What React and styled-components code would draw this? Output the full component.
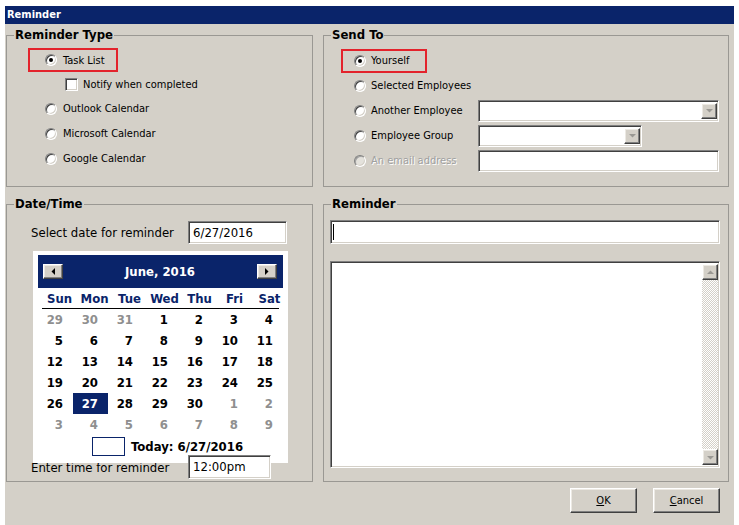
import React from 'react';
import styled, { createGlobalStyle } from 'styled-components';

const FONT = `"DejaVu Sans Condensed", "DejaVu Sans", "Liberation Sans", sans-serif`;
const NAVY = '#0a246a';
const FACE = '#d4d0c8';

const GlobalStyle = createGlobalStyle`
  html, body { margin: 0; padding: 0; background: #fff; }
  body { font-family: ${FONT}; color: #000; }
`;

const Page = styled.div`
  padding: 6px 0 0 5px;
`;

const Window = styled.div`
  width: 729px;
  height: 519px;
  background: ${FACE};
  display: flex;
  flex-direction: column;
`;

const TitleBar = styled.div`
  height: 18px;
  background: ${NAVY};
  color: #fff;
  font-weight: bold;
  font-size: 11px;
  line-height: 18px;
  padding-left: 2px;
`;

const Body = styled.div`
  display: grid;
  grid-template-columns: 307px 406px;
  grid-template-rows: 160px 286px;
  column-gap: 10px;
  row-gap: 9px;
  padding: 3px 6px 0 1px;
`;

const Group = styled.fieldset`
  margin: 0;
  padding: 0;
  min-width: 0;
  border: 1px solid #9a9893;
  display: flex;
  flex-direction: column;
`;

const Legend = styled.legend`
  margin-left: 7px;
  padding: 0 1px;
  font-weight: bold;
  font-size: 13px;
  line-height: 16px;
`;

/* ---------- shared control pieces ---------- */

const Radio = styled.span`
  width: 12px;
  height: 12px;
  border-radius: 50%;
  box-sizing: border-box;
  flex: none;
  background: ${p => (p.$disabled ? '#e4e2dc' : '#fff')};
  border: 1px solid;
  border-color: #808080 #fff #fff #808080;
  box-shadow: inset 1px 1px 0 ${p => (p.$disabled ? '#a0a0a0' : '#404040')}, inset -1px -1px 0 ${FACE};
  display: flex;
  align-items: center;
  justify-content: center;
  &::after {
    content: '';
    width: 4px;
    height: 4px;
    border-radius: 50%;
    background: #000;
    display: ${p => (p.$checked ? 'block' : 'none')};
  }
`;

const Check = styled.span`
  width: 13px;
  height: 13px;
  box-sizing: border-box;
  flex: none;
  background: #fff;
  border: 1px solid;
  border-color: #808080 #fff #fff #808080;
  box-shadow: inset 1px 1px 0 #404040, inset -1px -1px 0 ${FACE};
`;

const OptionLabel = styled.span`
  font-size: 11px;
  white-space: nowrap;
  color: ${p => (p.$disabled ? '#a0a0a0' : '#000')};
  text-shadow: ${p => (p.$disabled ? '1px 1px 0 #fff' : 'none')};
`;

const Option = styled.div`
  display: flex;
  align-items: center;
  gap: ${p => p.$gap || 6}px;
  height: ${p => p.$h || 25}px;
  padding-left: ${p => p.$indent || 0}px;
  box-sizing: border-box;
`;

const Highlight = styled(Option)`
  border: 2px solid #e3232c;
  width: ${p => p.$w}px;
`;

const Sunken = styled.div`
  box-sizing: border-box;
  background: #fff;
  border: 1px solid;
  border-color: #808080 #fff #fff #808080;
  box-shadow: inset 1px 1px 0 #404040, inset -1px -1px 0 ${FACE};
  width: ${p => p.$w}px;
  height: ${p => p.$h}px;
  font-size: 13px;
  line-height: ${p => p.$h - 2}px;
  padding-left: 4px;
  display: flex;
  align-items: center;
  position: relative;
`;

const Raised = styled.div`
  box-sizing: border-box;
  background: ${FACE};
  border: 1px solid;
  border-color: #fff #404040 #404040 #fff;
  box-shadow: inset -1px -1px 0 #808080, inset 1px 1px 0 #ece9e3;
  display: flex;
  align-items: center;
  justify-content: center;
`;

const DropButton = styled(Raised)`
  width: 16px;
  height: 16px;
  margin-left: auto;
  margin-right: 1px;
`;

const Arrow = ({ dir = 'down', color = '#9a9893', size = 7 }) => {
  const pts = {
    down: '0,2 7,2 3.5,5.5',
    up: '0,5 7,5 3.5,1.5',
    left: '5,0 5,7 1.5,3.5',
    right: '2,0 2,7 5.5,3.5',
  }[dir];
  return (
    <svg width={size} height={size} viewBox="0 0 7 7">
      <polygon points={pts} fill={color} />
    </svg>
  );
};

const Combo = ({ w }) => (
  <Sunken $w={w} $h={22}>
    <DropButton>
      <Arrow dir="down" />
    </DropButton>
  </Sunken>
);

/* ---------- Reminder Type ---------- */

const TypeList = styled.div`
  display: flex;
  flex-direction: column;
  align-items: flex-start;
  padding: 5px 0 0 21px;
`;

/* ---------- Send To ---------- */

const SendGrid = styled.div`
  display: grid;
  grid-template-columns: 137px 1fr;
  grid-auto-rows: 25px;
  align-items: center;
  padding: 5px 0 0 17px;
`;

/* ---------- Date/Time ---------- */

const FieldRow = styled.div`
  display: flex;
  align-items: center;
  padding-left: 24px;
  margin-top: ${p => p.$mt || 0}px;
`;

const FieldLabel = styled.span`
  width: 157px;
  flex: none;
  font-size: 13px;
  white-space: nowrap;
`;

/* the time box sits above the calendar's lower edge, the label below it */
const TimeInput = styled(Sunken)`
  z-index: 3;
`;

const Calendar = styled.div`
  width: 255px;
  height: 212px;
  margin: 7px 0 0 26px;
  background: #fff;
  box-sizing: border-box;
  padding: 4px 5px 0;
  position: relative;
  z-index: 2;
  font-weight: bold;
  font-size: 13px;
`;

const CalHeader = styled.div`
  height: 33px;
  background: ${NAVY};
  color: #fff;
  display: flex;
  align-items: center;
  justify-content: space-between;
  padding: 0 6px 0 5px;
`;

const NavButton = styled(Raised)`
  width: 20px;
  height: 15px;
`;

const WeekHead = styled.div`
  display: grid;
  grid-template-columns: repeat(7, 35px);
  height: 20px;
  align-items: center;
  margin: 0 4px;
  border-bottom: 1px solid #000;
  color: ${NAVY};
  & > span { text-align: center; margin: 0 -4px; }
`;

const DayGrid = styled.div`
  display: grid;
  grid-template-columns: repeat(7, 35px);
  grid-auto-rows: 21px;
`;

const Day = styled.span`
  display: flex;
  align-items: center;
  justify-content: flex-end;
  padding-right: 10px;
  color: ${p => (p.$selected ? '#fff' : p.$muted ? '#8f8f8f' : '#000')};
  background: ${p => (p.$selected ? NAVY : 'transparent')};
`;

const TodayRow = styled.div`
  display: flex;
  align-items: center;
  gap: 6px;
  height: 21px;
  margin-top: 1px;
  padding-left: 54px;
`;

const TodayBox = styled.span`
  width: 33px;
  height: 19px;
  box-sizing: border-box;
  border: 1px solid ${NAVY};
`;

/* ---------- Reminder text ---------- */

const TextColumn = styled.div`
  display: flex;
  flex-direction: column;
  padding: 8px 0 0 6px;
  gap: 17px;
`;

const Caret = styled.span`
  width: 1px;
  height: 16px;
  background: #000;
  margin-left: -2px;
`;

const Memo = styled(Sunken)`
  padding: 2px 1px 2px 2px;
  align-items: stretch;
  justify-content: flex-end;
`;

const ScrollBar = styled.div`
  width: 16px;
  display: flex;
  flex-direction: column;
  justify-content: space-between;
  background-color: #fff;
  background-image: repeating-conic-gradient(${FACE} 0 25%, #fff 0 50%);
  background-size: 2px 2px;
`;

const ScrollButton = styled(Raised)`
  width: 16px;
  height: 16px;
`;

/* ---------- footer ---------- */

const Footer = styled.div`
  display: flex;
  justify-content: flex-end;
  gap: 16px;
  padding: 6px 14px 0 0;
`;

const PushButton = styled(Raised)`
  width: 67px;
  height: 25px;
  font-size: 11px;
  u { text-decoration: underline; }
`;

const weeks = [
  [29, 30, 31, 1, 2, 3, 4],
  [5, 6, 7, 8, 9, 10, 11],
  [12, 13, 14, 15, 16, 17, 18],
  [19, 20, 21, 22, 23, 24, 25],
  [26, 27, 28, 29, 30, 1, 2],
  [3, 4, 5, 6, 7, 8, 9],
];

export default function App() {
  return (
    <Page>
      <GlobalStyle />
      <Window>
        <TitleBar>Reminder</TitleBar>
        <Body>
          <Group>
            <Legend>Reminder Type</Legend>
            <TypeList>
              <Highlight $w={90} $h={24} $indent={15}>
                <Radio $checked />
                <OptionLabel>Task List</OptionLabel>
              </Highlight>
              <Option $h={24} $indent={37} $gap={5}>
                <Check />
                <OptionLabel>Notify when completed</OptionLabel>
              </Option>
              <Option $indent={17}>
                <Radio />
                <OptionLabel>Outlook Calendar</OptionLabel>
              </Option>
              <Option $indent={17}>
                <Radio />
                <OptionLabel>Microsoft Calendar</OptionLabel>
              </Option>
              <Option $indent={17}>
                <Radio />
                <OptionLabel>Google Calendar</OptionLabel>
              </Option>
            </TypeList>
          </Group>

          <Group>
            <Legend>Send To</Legend>
            <SendGrid>
              <Highlight $w={86} $h={24} $indent={11} $gap={5}>
                <Radio $checked />
                <OptionLabel>Yourself</OptionLabel>
              </Highlight>
              <span />
              <Option $indent={13} $gap={5}>
                <Radio />
                <OptionLabel>Selected Employees</OptionLabel>
              </Option>
              <span />
              <Option $indent={13} $gap={5}>
                <Radio />
                <OptionLabel>Another Employee</OptionLabel>
              </Option>
              <Combo w={241} />
              <Option $indent={13} $gap={5}>
                <Radio />
                <OptionLabel>Employee Group</OptionLabel>
              </Option>
              <Combo w={164} />
              <Option $indent={13} $gap={5}>
                <Radio $disabled />
                <OptionLabel $disabled>An email address</OptionLabel>
              </Option>
              <Sunken $w={241} $h={22} />
            </SendGrid>
          </Group>

          <Group>
            <Legend>Date/Time</Legend>
            <FieldRow $mt={9}>
              <FieldLabel>Select date for reminder</FieldLabel>
              <Sunken $w={99} $h={23}>6/27/2016</Sunken>
            </FieldRow>
            <Calendar>
              <CalHeader>
                <NavButton>
                  <Arrow dir="left" color="#000" />
                </NavButton>
                <span>June, 2016</span>
                <NavButton>
                  <Arrow dir="right" color="#000" />
                </NavButton>
              </CalHeader>
              <WeekHead>
                {['Sun', 'Mon', 'Tue', 'Wed', 'Thu', 'Fri', 'Sat'].map(d => (
                  <span key={d}>{d}</span>
                ))}
              </WeekHead>
              <DayGrid>
                {weeks.map((week, wi) =>
                  week.map((d, di) => {
                    const muted = (wi === 0 && d > 20) || (wi >= 4 && d < 10);
                    return (
                      <Day key={`${wi}-${di}`} $muted={muted} $selected={wi === 4 && d === 27}>
                        {d}
                      </Day>
                    );
                  })
                )}
              </DayGrid>
              <TodayRow>
                <TodayBox />
                <span>Today: 6/27/2016</span>
              </TodayRow>
            </Calendar>
            <FieldRow $mt={-8}>
              <FieldLabel>Enter time for reminder</FieldLabel>
              <TimeInput $w={83} $h={24}>12:00pm</TimeInput>
            </FieldRow>
          </Group>

          <Group>
            <Legend>Reminder</Legend>
            <TextColumn>
              <Sunken $w={390} $h={24}>
                <Caret />
              </Sunken>
              <Memo $w={390} $h={207}>
                <ScrollBar>
                  <ScrollButton>
                    <Arrow dir="up" />
                  </ScrollButton>
                  <ScrollButton>
                    <Arrow dir="down" />
                  </ScrollButton>
                </ScrollBar>
              </Memo>
            </TextColumn>
          </Group>
        </Body>
        <Footer>
          <PushButton>
            <span><u>O</u>K</span>
          </PushButton>
          <PushButton>
            <span><u>C</u>ancel</span>
          </PushButton>
        </Footer>
      </Window>
    </Page>
  );
}
